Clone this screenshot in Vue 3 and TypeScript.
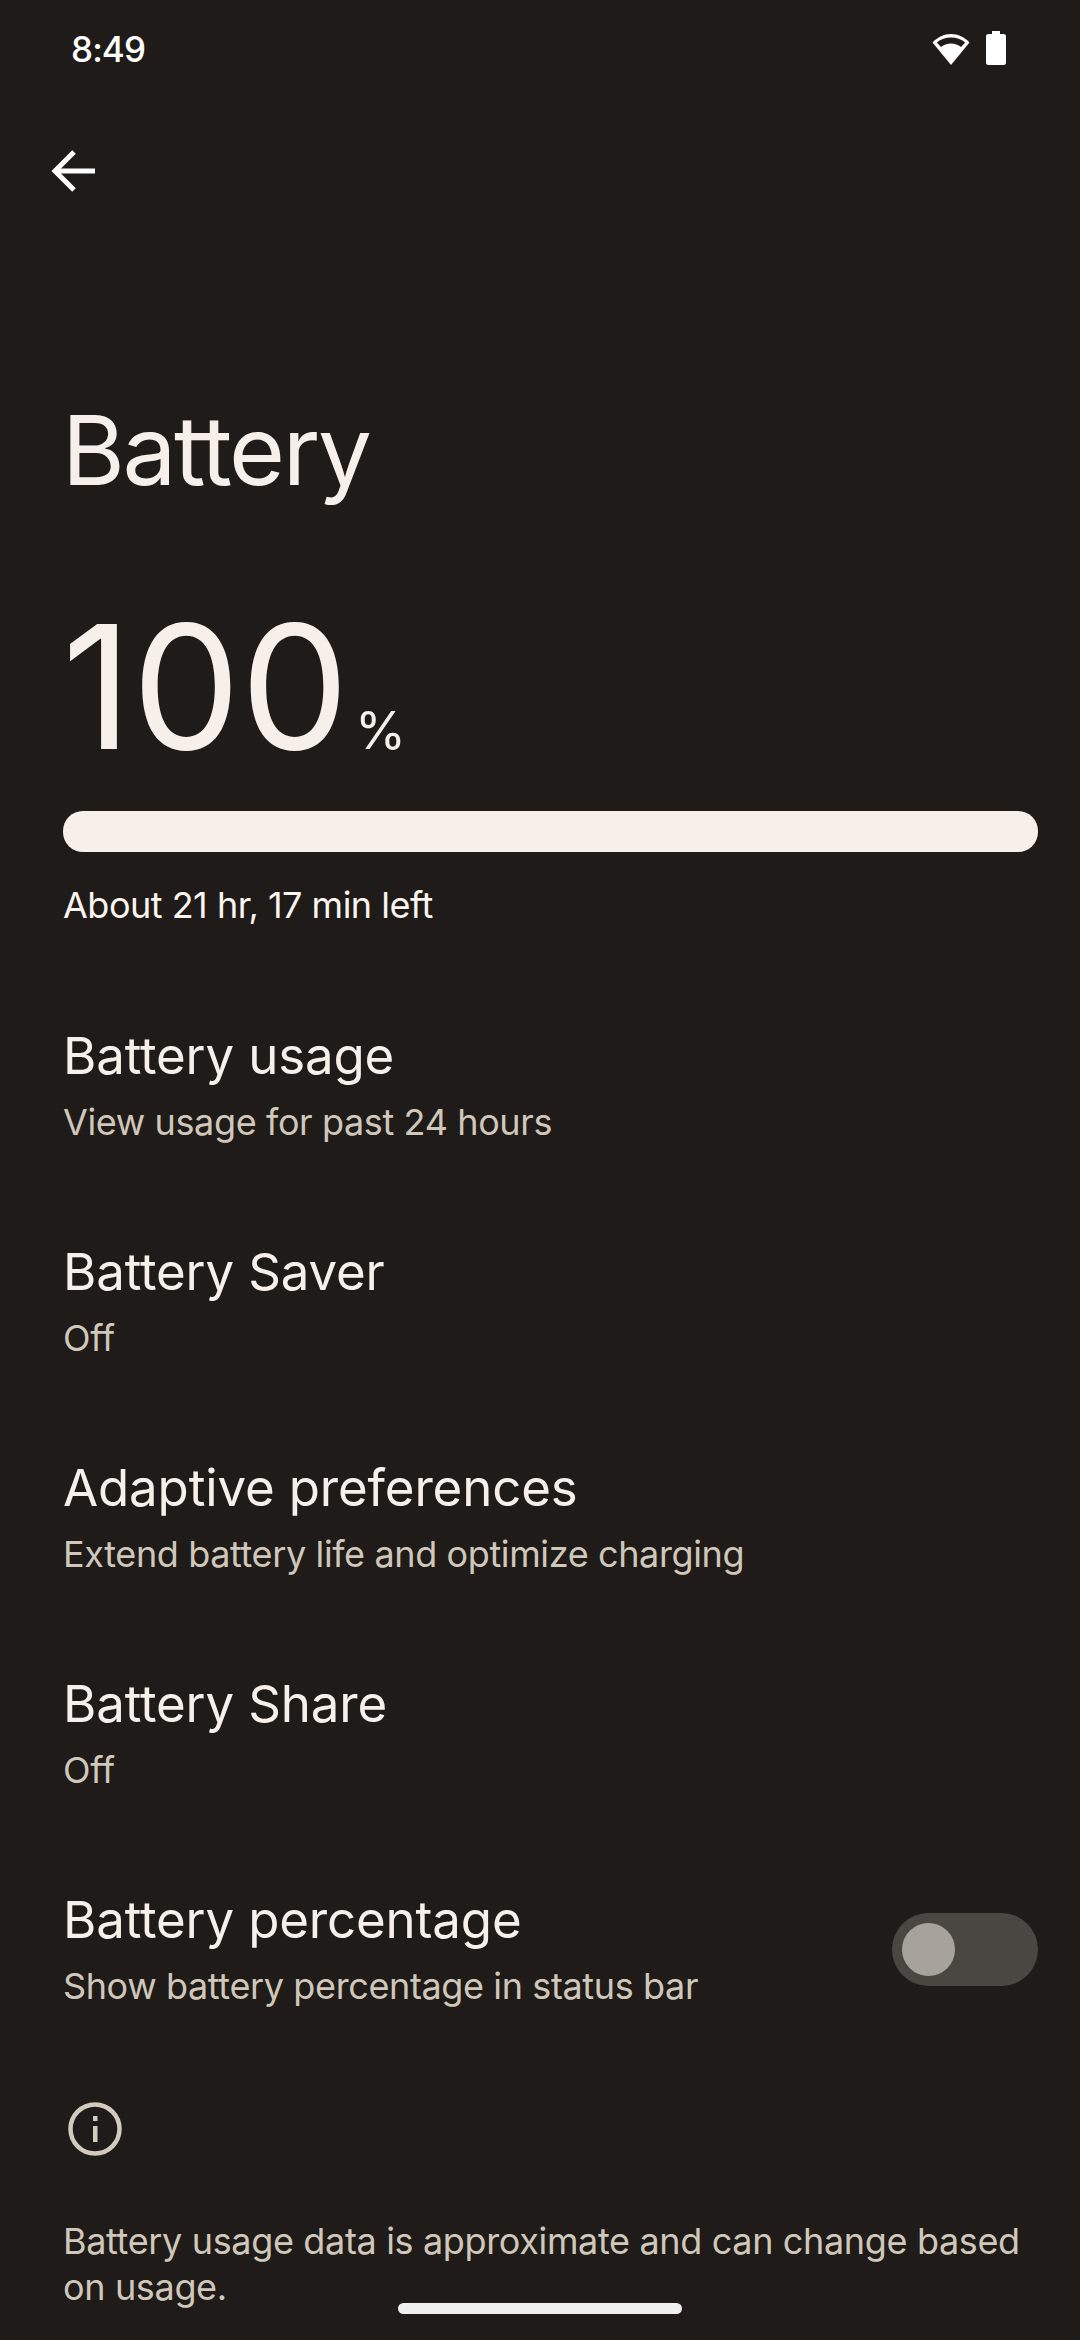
<script setup lang="ts">
interface Row { title: string; sub: string; toggle?: boolean }
const rows: Row[] = [
  { title: 'Battery usage', sub: 'View usage for past 24 hours' },
  { title: 'Battery Saver', sub: 'Off' },
  { title: 'Adaptive preferences', sub: 'Extend battery life and optimize charging' },
  { title: 'Battery Share', sub: 'Off' },
  { title: 'Battery percentage', sub: 'Show battery percentage in status bar', toggle: true },
]
</script>

<template>
  <div class="page">
    <header class="status">
      <span class="time">8:49</span>
      <div class="status-icons">
        <svg class="wifi" width="38" height="32" viewBox="0 0 38 32">
          <path d="M19 32 0.500 9.600C5.500 4 12 1 19 1s13.500 3 18.500 8.600Z" fill="#fff" />
          <path d="M19 10.500c-3.800 0-7.300 1.300-10 3.500L4.800 9.400C8.800 6.300 13.700 4.500 19 4.500s10.200 1.800 14.200 4.900L29 14c-2.700-2.200-6.200-3.500-10-3.500Z" fill="#1f1b18" />
        </svg>
        <svg class="batt" width="20" height="34" viewBox="0 0 20 34">
          <path d="M6 0h8v3h3.500A2.500 2.500 0 0 1 20 5.500v26a2.500 2.500 0 0 1-2.500 2.500h-15A2.500 2.500 0 0 1 0 31.500v-26A2.500 2.500 0 0 1 2.500 3H6Z" fill="#fff" />
        </svg>
      </div>
    </header>

    <div class="toolbar">
      <svg width="44" height="42" viewBox="0 0 44 42" fill="none" stroke="#fff" stroke-width="5">
        <path d="M44 21H5" />
        <path d="M23 2 4 21l19 19" />
      </svg>
    </div>

    <h1 class="title">Battery</h1>

    <div class="level">
      <span class="num">100</span><span class="pct">%</span>
    </div>
    <div class="bar"></div>
    <p class="left">About 21 hr, 17 min left</p>

    <div class="rows">
      <div v-for="r in rows" :key="r.title" class="row">
        <div class="row-text">
          <div class="row-title">{{ r.title }}</div>
          <div class="row-sub">{{ r.sub }}</div>
        </div>
        <div v-if="r.toggle" class="switch"><span class="thumb"></span></div>
      </div>
    </div>

    <svg class="info" width="54" height="54" viewBox="0 0 54 54" fill="none">
      <circle cx="27" cy="27" r="24.500" stroke="#d3cabe" stroke-width="4.500" />
      <rect x="25" y="24" width="4.500" height="16" fill="#d3cabe" />
      <rect x="25" y="14" width="4.500" height="5" fill="#d3cabe" />
    </svg>
    <p class="foot">Battery usage data is approximate and can change based on usage.</p>

    <div class="nav-pill"></div>
  </div>
</template>

<style>
html, body { margin: 0; background: #1f1b18; }
</style>

<style scoped>
.page {
  position: relative;
  width: 1080px;
  height: 2340px;
  overflow: hidden;
  background: #1f1b18;
  color: #f7f0ea;
  font-family: "Inter", "Noto Sans", sans-serif;
  box-sizing: border-box;
}
.status {
  height: 96px;
  box-sizing: border-box;
  padding: 31px 74px 0 71px;
  display: flex;
  justify-content: space-between;
  align-items: flex-start;
}
.time {
  font-size: 35px;
  line-height: 36px;
  font-weight: 500;
  color: #fff;
  letter-spacing: -0.9px;
}
.status-icons { display: flex; align-items: flex-start; gap: 16px; }
.wifi { margin-top: 2px; display: block; }
.batt { display: block; }
.toolbar {
  height: 42px;
  padding: 54px 0 0 51px;
}
.toolbar svg { display: block; }
.title {
  margin: 224px 0 0;
  padding: 0 0 0 62px;
  font-size: 96px;
  line-height: 68px;
  font-weight: 400;
  height: 68px;
  letter-spacing: -2.3px;
}
.level {
  margin-top: 139px;
  padding-left: 62px;
  display: flex;
  align-items: baseline;
  line-height: 126px;
  height: 126px;
}
.num { font-size: 172px; font-weight: 400; line-height: 126px; letter-spacing: 0; }
.pct { font-size: 52px; margin-left: 6px; line-height: 46px; }
.bar {
  margin: 62px 42px 0 63px;
  height: 41px;
  border-radius: 20px;
  background: #f7f0ea;
}
.left {
  margin: 31px 0 0 63px;
  font-size: 36px;
  line-height: 44px;
  color: #fbf5ef;
  letter-spacing: -0.5px;
}
.rows {
  margin-top: 95px;
  padding: 0 42px 0 63px;
}
.row {
  height: 216px;
  display: flex;
  justify-content: space-between;
  align-items: flex-start;
}
.row-title {
  font-size: 51px;
  line-height: 68px;
  color: #f7f0ea;
  letter-spacing: -0.15px;
}
.row-sub {
  font-size: 36px;
  line-height: 50px;
  margin-top: 7px;
  color: #d0c7bb;
  letter-spacing: -0.38px;
}
.switch {
  width: 146px;
  height: 73px;
  border-radius: 37px;
  background: #4a4642;
  margin-top: 27px;
  padding: 10px;
  box-sizing: border-box;
}
.thumb {
  display: block;
  width: 53px;
  height: 53px;
  border-radius: 50%;
  background: #a8a29c;
}
.info {
  display: block;
  margin: 0 0 0 68px;
}
.foot {
  margin: 62px 30px 0 63px;
  font-size: 36px;
  line-height: 46px;
  color: #d0c7bb;
  letter-spacing: -0.35px;
}
.nav-pill {
  position: absolute;
  left: 398px;
  bottom: 26px;
  width: 284px;
  height: 11px;
  border-radius: 6px;
  background: #efefef;
}
</style>
